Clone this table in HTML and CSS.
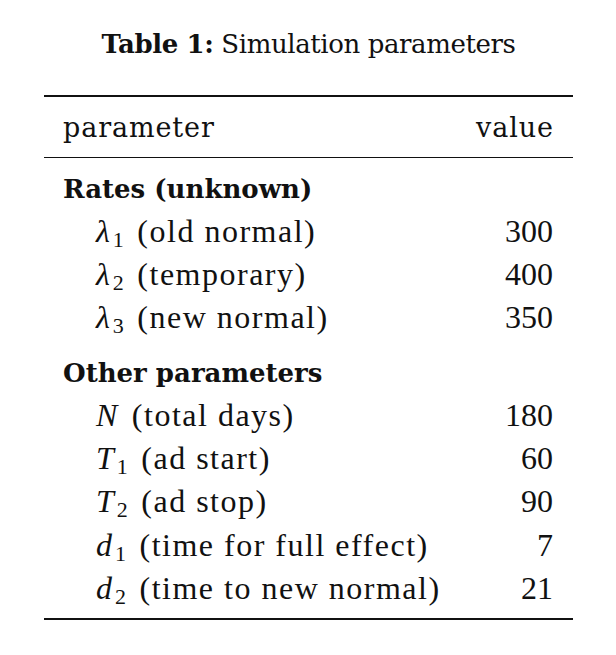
FILE: index.html
```html
<!DOCTYPE html>
<html>
<head>
<meta charset="utf-8">
<link rel="stylesheet" href="styles.css">
</head>
<body>
<div class="figure">
  <div class="caption"><b>Table 1:</b> Simulation parameters</div>
  <div class="table">
    <div class="row head"><span>parameter</span><span class="right">value</span></div>
    <div class="tbody">
      <div class="row group"><span>Rates (unknown)</span></div>
      <div class="row item"><span class="desc"><i class="m">λ</i><span class="sub">1</span> (old normal)</span><span class="num">300</span></div>
      <div class="row item"><span class="desc"><i class="m">λ</i><span class="sub">2</span> (temporary)</span><span class="num">400</span></div>
      <div class="row item"><span class="desc"><i class="m">λ</i><span class="sub">3</span> (new normal)</span><span class="num">350</span></div>
      <div class="row group second"><span>Other parameters</span></div>
      <div class="row item"><span class="desc"><i class="m solo">N</i> (total days)</span><span class="num">180</span></div>
      <div class="row item"><span class="desc"><i class="m">T</i><span class="sub">1</span> (ad start)</span><span class="num">60</span></div>
      <div class="row item"><span class="desc"><i class="m">T</i><span class="sub">2</span> (ad stop)</span><span class="num">90</span></div>
      <div class="row item"><span class="desc"><i class="m">d</i><span class="sub">1</span> (time for full effect)</span><span class="num">7</span></div>
      <div class="row item"><span class="desc"><i class="m">d</i><span class="sub">2</span> (time to new normal)</span><span class="num">21</span></div>
    </div>
  </div>
</div>
</body>
</html>
```

FILE: styles.css
```css
body {
  margin: 0;
  background: #ffffff;
  color: #111111;
}
.figure {
  width: 529px;
  margin-left: 44px;
  padding-top: 23.5px;
}
.caption {
  font-family: "DejaVu Serif", serif;
  font-size: 26px;
  line-height: 40px;
  letter-spacing: -0.4px;
  text-align: center;
}
.caption b {
  font-weight: bold;
}
.table {
  margin-top: 31.5px;
  border-top: 2px solid #111111;
  border-bottom: 2px solid #111111;
}
.row {
  display: flex;
  justify-content: space-between;
  align-items: baseline;
  height: 43.33px;
  line-height: 43.33px;
  padding: 0 20px 0 19px;
}
.head {
  font-family: "DejaVu Serif", serif;
  font-size: 27px;
  letter-spacing: 0.9px;
  padding-top: 9.3px;
  padding-bottom: 7.3px;
  border-bottom: 1px solid #111111;
}
.head .right {
  margin-right: -0.9px;
}
.tbody {
  padding-top: 10.3px;
  padding-bottom: 5.7px;
}
.group {
  font-family: "DejaVu Serif", serif;
  font-weight: bold;
  font-size: 26px;
}
.group.second {
  margin-top: 10.8px;
}
.item {
  font-family: "Liberation Serif", serif;
  font-size: 32px;
  line-height: 39.5px;
  padding-left: 52px;
}
.desc {
  letter-spacing: 1.5px;
}
.m {
  font-style: italic;
  letter-spacing: 0;
  margin-right: 3px;
}
.m.solo {
  margin-right: 5px;
}
.sub {
  font-size: 22px;
  vertical-align: -5px;
  line-height: 1;
  letter-spacing: 0;
  margin-right: 4px;
}
```
